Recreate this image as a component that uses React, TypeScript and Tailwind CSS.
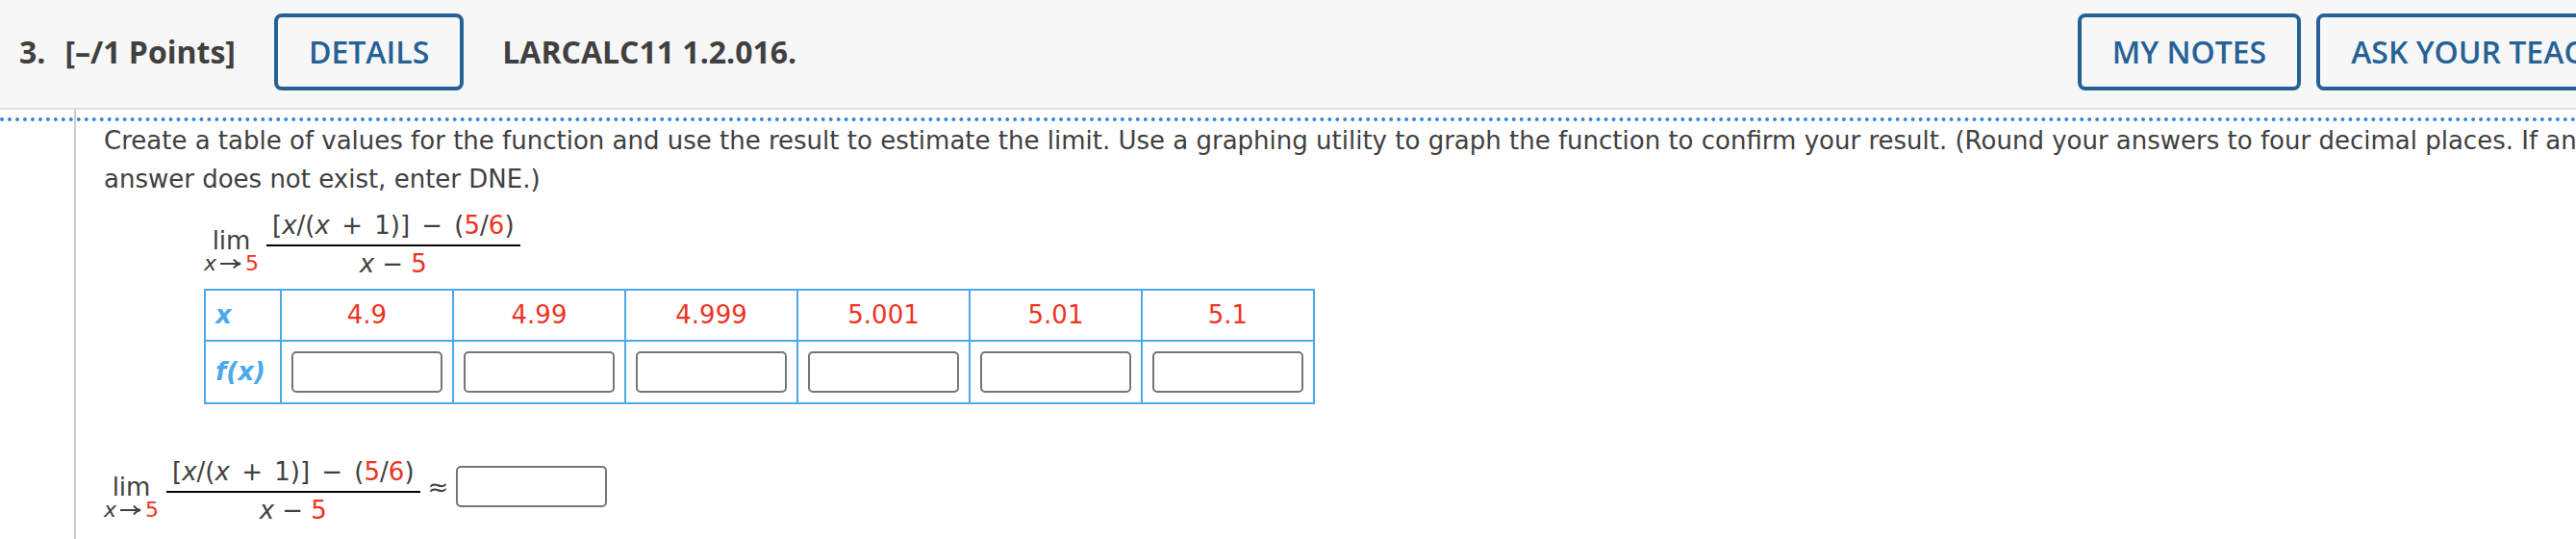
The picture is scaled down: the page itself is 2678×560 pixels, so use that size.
import type { ReactNode } from "react";

const points = ["4.9", "4.99", "4.999", "5.001", "5.01", "5.1"];

const Val = ({ children }: { children: ReactNode }) => (
  <span className="text-[#ee3322]">{children}</span>
);

const Op = ({ children }: { children: ReactNode }) => (
  <span className="mx-1">{children}</span>
);

function HeaderButton({ children }: { children: ReactNode }) {
  return (
    <button
      type="button"
      className="h-20 shrink-0 whitespace-nowrap rounded-lg border-4 border-[#266196] px-8 font-semibold text-[#266196]"
    >
      {children}
    </button>
  );
}

function AnswerBox({ label }: { label: string }) {
  return (
    <input
      type="text"
      aria-label={label}
      className="block h-[43px] w-[157px] rounded-[5px] border-2 border-[#767676] bg-white px-2"
    />
  );
}

function Limit() {
  return (
    <div className="flex">
      <div className="mt-4 flex flex-col items-center">
        <span className="leading-8">lim</span>
        <span className="flex items-center text-[22px] leading-4">
          <i>x</i>
          <svg
            className="mx-1 h-3 w-[22px]"
            viewBox="0 0 22 12"
            fill="none"
            stroke="currentColor"
            strokeWidth="2"
            aria-hidden="true"
          >
            <path d="M0 6H20M14 1.5Q16.500 5 21 6Q16.500 7 14 10.500" />
          </svg>
          <Val>5</Val>
        </span>
      </div>
      <div className="ml-2 flex flex-col items-center">
        <span className="border-b-2 border-black px-1.5 pb-1 leading-8">
          [<i>x</i>/(<i>x</i> <Op>+</Op> 1)] <Op>−</Op> (<Val>5</Val>/<Val>6</Val>)
        </span>
        <span className="leading-9">
          <i>x</i> − <Val>5</Val>
        </span>
      </div>
    </div>
  );
}

export default function App() {
  return (
    <main className="min-h-screen overflow-x-hidden bg-white font-['DejaVu_Sans',Verdana,sans-serif] text-[26px] text-[#404040]">
      <div className="flex min-h-screen w-[calc(100%+122px)] flex-col">
        <header className="flex items-start border-b-2 border-[#dddddd] bg-[#f7f7f7] pt-3.5 pb-[18px] pl-5 pr-4 font-['Open_Sans',sans-serif] text-[32px]">
          <h1 className="flex h-20 items-center font-bold">
            <span className="mr-5">3.</span>
            <span className="mr-10">[–/1 Points]</span>
          </h1>
          <HeaderButton>DETAILS</HeaderButton>
          <span className="ml-10 flex h-20 items-center font-bold">LARCALC11 1.2.016.</span>
          <div className="ml-auto flex gap-4">
            <HeaderButton>MY NOTES</HeaderButton>
            <HeaderButton>ASK YOUR TEACHER</HeaderButton>
          </div>
        </header>

        <div className="grid grow grid-cols-[77px_1fr] grid-rows-[auto_1fr]">
          <div className="z-10 col-span-2 col-start-1 row-start-1 mt-2 border-t-4 border-dotted border-[#3584e4]" />
          <section className="col-start-2 row-span-2 row-start-1 border-l-2 border-[#cccccc] pt-3 pr-24 pl-[29px]">
            <p className="leading-10">
              Create a table of values for the function and use the result to estimate the limit. Use a
              graphing utility to graph the function to confirm your result. (Round your answers to four
              decimal places. If an answer does not exist, enter DNE.)
            </p>

            <div className="mt-3 ml-[104px]">
              <Limit />
              <table className="mt-2 border-collapse border-2 border-[#4ba9e9]">
                <tbody>
                  <tr className="h-[53px]">
                    <th scope="row" className="border-2 border-[#4ba9e9] pl-2.5 text-left text-[#4ba9e9]">
                      <i>x</i>
                    </th>
                    {points.map((p) => (
                      <td key={p} className="border-2 border-[#4ba9e9] text-center text-[#ee3322]">
                        {p}
                      </td>
                    ))}
                  </tr>
                  <tr className="h-[65px]">
                    <th
                      scope="row"
                      className="w-[79px] border-2 border-[#4ba9e9] pl-2.5 text-left text-[#4ba9e9]"
                    >
                      <i>f(x)</i>
                    </th>
                    {points.map((p) => (
                      <td key={p} className="border-2 border-[#4ba9e9] px-2.5">
                        <AnswerBox label={`f(${p})`} />
                      </td>
                    ))}
                  </tr>
                </tbody>
              </table>
            </div>

            <div className="mt-[54px] flex">
              <Limit />
              <span className="mx-2 mt-3.5 leading-9">≈</span>
              <div className="mt-2.5">
                <AnswerBox label="Estimated limit" />
              </div>
            </div>
          </section>
        </div>
      </div>
    </main>
  );
}
